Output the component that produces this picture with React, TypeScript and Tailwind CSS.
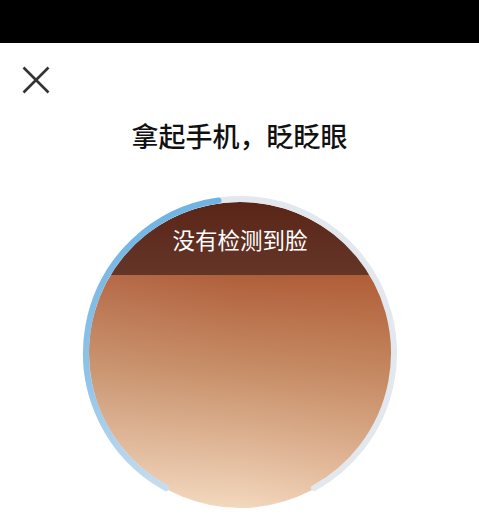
import React from "react";

export default function App() {
  return (
    <div
      className="w-[479px] h-[525px] bg-white overflow-hidden flex flex-col"
      style={{ fontFamily: '"Noto Sans CJK SC", "Noto Sans", sans-serif' }}
    >
      <div className="h-[43px] bg-black shrink-0" />
      <div className="pl-[22px] pt-[23px]">
        <svg width="28" height="28" viewBox="0 0 28 28" fill="none">
          <path d="M1.5 1.5L26.5 26.5M26.5 1.5L1.5 26.5" stroke="#333333" strokeWidth="2.6" />
        </svg>
      </div>
      <div className="mt-[29px] text-center text-[27px] leading-[26px] font-medium text-[#111111]">
        拿起手机，眨眨眼
      </div>
      <div className="mt-[46px] ml-[82px] relative w-[316px] h-[316px]">
        <div className="ml-[5px] mt-[7px] w-[306px] h-[306px] rounded-full overflow-hidden flex flex-col">
          <div className="h-[73px] shrink-0 flex items-center justify-center bg-gradient-to-b from-[#5a2517] to-[#643628] text-white text-[22.5px] leading-[22px]">
            没有检测到脸
          </div>
          <div className="flex-1 relative bg-gradient-to-b from-[#b05f3a] via-[#c68d66] via-40% to-[#f3d8be]">
            <div className="absolute inset-0 bg-gradient-to-r from-[#ffffff14] via-transparent to-[#b0552a22]" />
          </div>
        </div>
        <svg className="absolute inset-0" width="316" height="316" viewBox="0 0 316 316" fill="none">
          <defs>
            <linearGradient id="pg" x1="0" y1="0" x2="0" y2="300" gradientUnits="userSpaceOnUse">
              <stop offset="0" stopColor="#6db3e3" />
              <stop offset="0.6" stopColor="#8ec3e8" />
              <stop offset="1" stopColor="#c9def0" />
            </linearGradient>
          </defs>
          <path
            d="M 84.05 293.07 A 154 154 0 1 1 231.95 293.07"
            stroke="#e2e8ed"
            strokeWidth="6"
            strokeLinecap="round"
          />
          <path
            d="M 84.05 293.07 A 154 154 0 0 1 136.57 5.5"
            stroke="url(#pg)"
            strokeWidth="6"
            strokeLinecap="round"
          />
        </svg>
      </div>
    </div>
  );
}
